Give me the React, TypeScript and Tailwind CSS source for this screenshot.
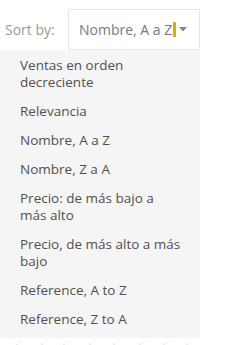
import React from 'react';

const options: string[][] = [
  ['Ventas en orden', 'decreciente'],
  ['Relevancia'],
  ['Nombre, A a Z'],
  ['Nombre, Z a A'],
  ['Precio: de más bajo a', 'más alto'],
  ['Precio, de más alto a más', 'bajo'],
  ['Reference, A to Z'],
  ['Reference, Z to A'],
];

export default function App() {
  return (
    <div className="w-[250px] h-[345px] bg-white overflow-hidden" style={{ fontFamily: '"Open Sans", "DejaVu Sans", sans-serif' }}>
      {/* Sort header */}
      <div className="flex items-center pt-[9px]">
        <span className="w-[68px] pl-[5px] text-[14px] text-[#9a9a9a]">Sort by:</span>
        <div className="w-[132px] h-[41px] border border-[#e6e6e6] flex items-center pl-[10px]">
          <span className="text-[14px] text-[#7a7a7a]">Nombre, A a Z</span>
          <span className="w-[3px] h-[15px] bg-[#d4b106] ml-[1px]" />
          <svg width="8" height="5" viewBox="0 0 8 5" className="ml-[3px]">
            <path d="M0 0 L8 0 L4 4.5 Z" fill="#8a8a8a" />
          </svg>
        </div>
      </div>

      {/* Dropdown list */}
      <div className="w-[200px] bg-[#f5f5f5] pt-[1px] pb-[4px]">
        {options.map((lines, i) => (
          <div key={i} className="pl-[20px] pr-[10px] py-[6px] text-[13.5px] leading-[17px] text-[#505050]">
            {lines.map((l, j) => (
              <div key={j}>{l}</div>
            ))}
          </div>
        ))}
      </div>

      {/* faint pattern below */}
      <svg width="200" height="8" viewBox="0 0 200 8" className="block">
        {[15, 40, 62, 88, 112, 138, 162, 185].map((x) => (
          <path key={x} d={`M${x} 5 l2 2 l5 -5`} stroke="#ececec" strokeWidth="1" fill="none" />
        ))}
      </svg>
    </div>
  );
}
